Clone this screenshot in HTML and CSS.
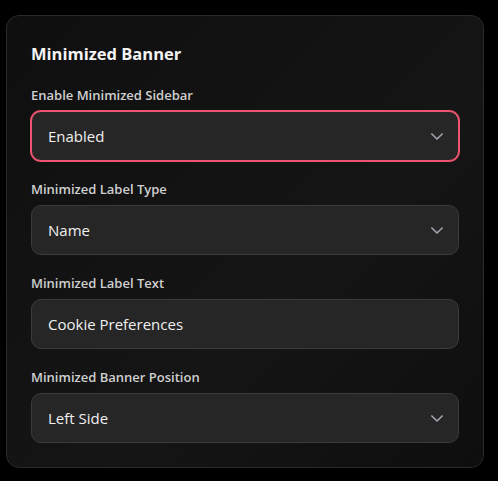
FILE: index.html
```html
<!DOCTYPE html>
<html lang="en">
<head>
    <meta charset="UTF-8">
    <meta name="viewport" content="width=device-width, initial-scale=1.0">
    <title>Minimized Banner</title>
    <link rel="stylesheet" href="styles.css">
</head>
<body>
    <div class="panel">
        <h2>Minimized Banner</h2>

        <div class="field">
            <label>Enable Minimized Sidebar</label>
            <div class="select focused">
                <span>Enabled</span>
                <svg class="chev" width="14" height="8" viewBox="0 0 14 8"><path d="M1 1l6 6 6-6"/></svg>
            </div>
        </div>

        <div class="field">
            <label>Minimized Label Type</label>
            <div class="select">
                <span>Name</span>
                <svg class="chev" width="14" height="8" viewBox="0 0 14 8"><path d="M1 1l6 6 6-6"/></svg>
            </div>
        </div>

        <div class="field">
            <label>Minimized Label Text</label>
            <div class="select">
                <span>Cookie Preferences</span>
            </div>
        </div>

        <div class="field">
            <label>Minimized Banner Position</label>
            <div class="select">
                <span>Left Side</span>
                <svg class="chev" width="14" height="8" viewBox="0 0 14 8"><path d="M1 1l6 6 6-6"/></svg>
            </div>
        </div>
    </div>
</body>
</html>
```

FILE: styles.css
```css
body{
    margin: 0;
    background: #000;
    font-family: "Open Sans", "Noto Sans", sans-serif;
    color: #f2f2f2;
}
.panel{
    margin: 15px 0 0 6px;
    width: 478px;
    height: 453px;
    box-sizing: border-box;
    padding: 26px 24px 0 24px;
    border: 1px solid #2a2a2a;
    border-radius: 13px;
    background: linear-gradient(135deg, #0f0f0f 0%, #151515 60%, #0e0e0e 100%);
}
.panel>h2{
    margin: 0 0 21px 0;
    font-size: 16.5px;
    font-weight: 700;
    line-height: 24px;
    color: #f4f4f4;
}
.field{
    margin-bottom: 20px;
}
.field>label{
    display: block;
    font-size: 13px;
    font-weight: 600;
    line-height: 16px;
    color: #cfcfcf;
    margin-bottom: 8px;
}
.select{
    display: flex;
    align-items: center;
    justify-content: space-between;
    height: 50px;
    box-sizing: border-box;
    padding: 0 16px 0 16px;
    border: 1px solid #3b3b3b;
    border-radius: 10px;
    background: #262626;
    font-size: 15px;
    color: #f0f0f0;
}
.focused{
    border-color: #ef5472;
    box-shadow: 0 0 0 1px #ef5472;
}
.chev{
    width: 12px;
    height: 7px;
    margin-right: -1px;
    fill: none;
    stroke: #a3a7b2;
    stroke-width: 1.8;
    stroke-linecap: round;
    stroke-linejoin: round;
}
```
